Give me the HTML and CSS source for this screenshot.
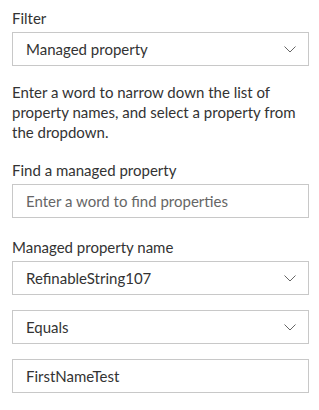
FILE: index.html
```html
<!DOCTYPE html>
<html>
<head>
<meta charset="utf-8">
<link rel="stylesheet" href="styles.css">
</head>
<body>
<div class="panel">
  <div class="label">Filter</div>
  <div class="field dropdown">
    <span class="value">Managed property</span>
    <svg class="chev" width="12" height="7" viewBox="0 0 12 7"><path d="M0.5 0.5 L6 6 L11.5 0.5" fill="none" stroke="#666" stroke-width="1"/></svg>
  </div>

  <p class="desc">Enter a word to narrow down the list of property names, and select a property from the dropdown.</p>

  <div class="label">Find a managed property</div>
  <div class="field text">
    <span class="placeholder">Enter a word to find properties</span>
  </div>

  <div class="label label-spaced">Managed property name</div>
  <div class="field dropdown">
    <span class="value">RefinableString107</span>
    <svg class="chev" width="12" height="7" viewBox="0 0 12 7"><path d="M0.5 0.5 L6 6 L11.5 0.5" fill="none" stroke="#666" stroke-width="1"/></svg>
  </div>

  <div class="field dropdown gap">
    <span class="value">Equals</span>
    <svg class="chev" width="12" height="7" viewBox="0 0 12 7"><path d="M0.5 0.5 L6 6 L11.5 0.5" fill="none" stroke="#666" stroke-width="1"/></svg>
  </div>

  <div class="field text gap">
    <span class="value">FirstNameTest</span>
  </div>
</div>
</body>
</html>
```

FILE: styles.css
```css
html, body {
  margin: 0;
  padding: 0;
  background: #ffffff;
}
body {
  font-family: Lato, "Open Sans", sans-serif;
  font-size: 15px;
  color: #333333;
}
.panel {
  width: 297px;
  padding: 8px 10px 0 12px;
}
.label {
  line-height: 20px;
  margin-bottom: 4px;
  color: #333333;
}
.label-spaced {
  margin-top: 19px;
}
.field {
  box-sizing: border-box;
  height: 34px;
  border: 1px solid #c8c8c8;
  display: flex;
  align-items: center;
  padding: 0 12px 0 13px;
}
.dropdown {
  justify-content: space-between;
}
.chev {
  display: block;
  margin-right: 0;
}
.placeholder {
  color: #666666;
}
.value {
  color: #333333;
}
.desc {
  margin: 16px 0 18px 0;
  line-height: 20px;
  width: 285px;
}
.gap {
  margin-top: 15px;
}
```
